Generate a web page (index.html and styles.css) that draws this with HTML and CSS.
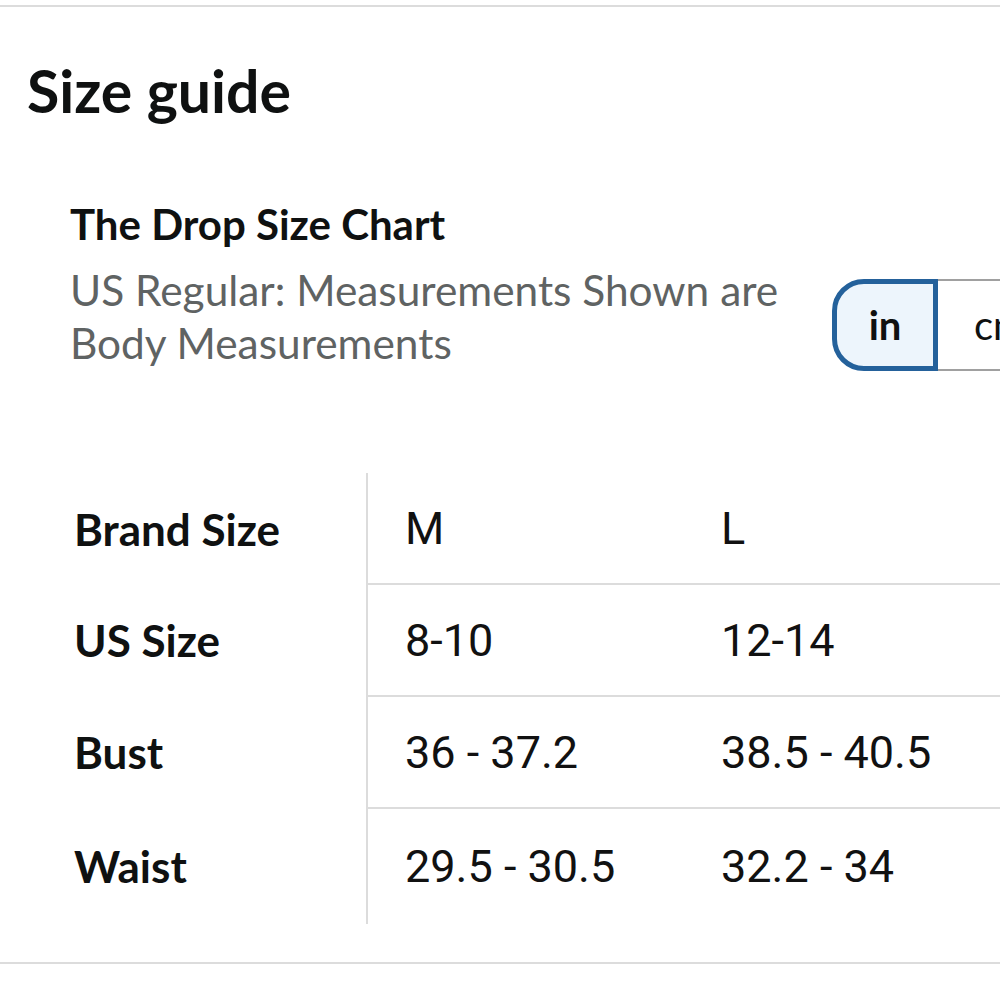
FILE: index.html
```html
<!DOCTYPE html>
<html lang="en">
<head>
<meta charset="utf-8">
<title>Size guide</title>
<link rel="stylesheet" href="styles.css">
</head>
<body>
<div class="page">
  <div class="rule"></div>
  <h1 class="title">Size guide</h1>
  <section class="chart">
    <h2 class="chart-title">The Drop Size Chart</h2>
    <div class="chart-head">
      <p class="chart-desc">US Regular: Measurements Shown are Body Measurements</p>
      <div class="units">
        <button class="unit unit-active" type="button">in</button>
        <button class="unit unit-cm" type="button">cm</button>
      </div>
    </div>
    <table class="sizes">
      <tbody>
        <tr>
          <th>Brand Size</th>
          <td>M</td>
          <td>L</td>
        </tr>
        <tr>
          <th>US Size</th>
          <td>8-10</td>
          <td>12-14</td>
        </tr>
        <tr>
          <th>Bust</th>
          <td>36 - 37.2</td>
          <td>38.5 - 40.5</td>
        </tr>
        <tr class="last">
          <th>Waist</th>
          <td>29.5 - 30.5</td>
          <td>32.2 - 34</td>
        </tr>
      </tbody>
    </table>
  </section>
  <div class="rule rule-bottom"></div>
</div>
</body>
</html>
```

FILE: styles.css
```css
html, body {
  margin: 0;
  padding: 0;
  overflow: hidden;
  background: #ffffff;
}

.page {
  width: 1000px;
  height: 1001px;
  overflow: hidden;
  font-family: Lato, "Noto Sans", sans-serif;
  color: #0f1111;
}

.rule {
  height: 2px;
  background: #dcdcdc;
  margin-top: 5px;
}

.rule-bottom {
  margin-top: 38px;
}

.title {
  margin: 50px 0 0 27px;
  font-size: 59px;
  line-height: 68px;
  font-weight: 700;
}

.chart {
  padding-left: 70px;
}

.chart-title {
  margin: 73px 0 0 0;
  font-size: 42px;
  line-height: 52px;
  font-weight: 700;
}

.chart-head {
  display: flex;
  align-items: flex-start;
  gap: 50px;
  margin-top: 13px;
}

.chart-desc {
  margin: 0;
  width: 712px;
  flex-shrink: 0;
  font-size: 42.4px;
  line-height: 53px;
  color: #5f6363;
}

.units {
  display: flex;
  flex-shrink: 0;
  margin-top: 16px;
  height: 92px;
}

.unit {
  box-sizing: border-box;
  height: 92px;
  width: 106px;
  padding: 0;
  font-family: Lato, "Noto Sans", sans-serif;
  font-size: 40px;
  color: #0f1111;
  background: #ffffff;
  border: 2px solid #a0a0a0;
  border-left: none;
  border-radius: 0;
}

.unit-cm {
  width: 140px;
  text-align: left;
  padding-left: 36px;
}

.unit-active {
  background: #edf5fc;
  border: 5px solid #24619b;
  border-radius: 32px 0 0 32px;
  font-weight: 700;
}

.sizes {
  margin-top: 102px;
  width: 930px;
  border-collapse: collapse;
  table-layout: fixed;
}

.sizes th,
.sizes td {
  height: 112px;
  padding: 0;
  vertical-align: middle;
  text-align: left;
  white-space: nowrap;
}

.sizes tr:first-child th,
.sizes tr:first-child td {
  height: 111px;
}

.sizes tr.last th,
.sizes tr.last td {
  height: 116px;
}

.sizes th {
  width: 297px;
  padding-left: 4px;
  box-sizing: border-box;
  font-size: 44px;
  font-weight: 700;
  border-right: 2px solid #dcdcdc;
}

.sizes td {
  padding-left: 37px;
  box-sizing: border-box;
  font-family: Roboto, "Liberation Sans", sans-serif;
  font-size: 45px;
  font-weight: 400;
  color: #111111;
  border-top: 2px solid #dcdcdc;
}

.sizes td:nth-child(2) {
  width: 317px;
}

.sizes tr:first-child td {
  border-top: none;
}
```
